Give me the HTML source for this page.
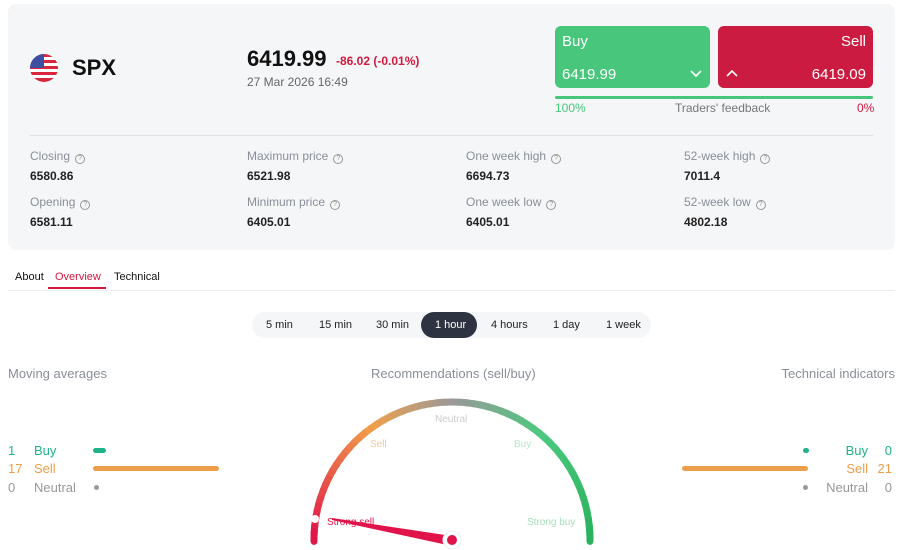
<!DOCTYPE html>
<html><head><meta charset="utf-8"><style>
*{margin:0;padding:0;box-sizing:border-box}
body{width:900px;height:550px;overflow:hidden;background:#fff;font-family:"Liberation Sans",sans-serif;position:relative;color:#111}
.a{position:absolute;white-space:nowrap}
.card{left:8px;top:4px;width:887px;height:246px;background:#f5f6f8;border-radius:8px}
.lbl{font-size:12px;color:#8a8f98}
.q{display:inline-block;width:10px;height:10px;border:1px solid #999;border-radius:50%;font-size:7px;line-height:8px;text-align:center;color:#999;margin-left:5px;vertical-align:0}
.val{font-size:12px;font-weight:bold;color:#222}
.seg{font-size:11px;color:#222}
</style></head><body>
<div class="a card"></div>
<svg class="a" style="left:30px;top:54px" width="28" height="28" viewBox="0 0 28 28"><defs><clipPath id="c"><circle cx="14" cy="14" r="14"/></clipPath></defs><g clip-path="url(#c)"><rect width="28" height="28" fill="#fff"/><rect y="0" width="28" height="3" fill="#d7263d"/><rect y="6" width="28" height="3" fill="#d7263d"/><rect y="12" width="28" height="3" fill="#d7263d"/><rect y="18" width="28" height="3" fill="#d7263d"/><rect y="24" width="28" height="4" fill="#d7263d"/><rect width="14" height="14" fill="#3c4fa0"/></g></svg>
<div class="a" style="left:72px;top:55px;font-size:22px;font-weight:bold">SPX</div>
<div class="a" style="left:247px;top:46px;font-size:22px;font-weight:bold">6419.99</div>
<div class="a" style="left:336px;top:54px;font-size:12px;font-weight:bold;color:#d3193f">-86.02 (-0.01%)</div>
<div class="a" style="left:247px;top:75px;font-size:12px;color:#666">27 Mar 2026 16:49</div>
<div class="a" style="left:555px;top:26px;width:155px;height:62px;background:#48c77c;border-radius:6px;color:#fff">
<div class="a" style="left:7px;top:7px;font-size:15px">Buy</div>
<div class="a" style="left:7px;top:40px;font-size:15px">6419.99</div>
<svg class="a" style="left:134px;top:43px" width="14" height="10"><path d="M2 2l5 5 5-5" stroke="#fff" stroke-width="1.6" fill="none"/></svg></div>
<div class="a" style="left:718px;top:26px;width:155px;height:62px;background:#cc1b40;border-radius:6px;color:#fff">
<div class="a" style="right:7px;top:7px;font-size:15px">Sell</div>
<div class="a" style="right:7px;top:40px;font-size:15px">6419.09</div>
<svg class="a" style="left:7px;top:43px" width="14" height="10"><path d="M2 7l5-5 5 5" stroke="#fff" stroke-width="1.6" fill="none"/></svg></div>
<div class="a" style="left:555px;top:96px;width:318px;height:3px;background:#48c77c;border-radius:2px"></div>
<div class="a" style="left:555px;top:101px;font-size:12px;color:#48c77c">100%</div>
<div class="a" style="left:675px;top:101px;font-size:12px;color:#777">Traders' feedback</div>
<div class="a" style="left:857px;top:101px;font-size:12px;color:#d3193f">0%</div>
<div class="a" style="left:30px;top:135px;width:843px;height:1px;background:#dde0e4"></div>
<div class="a lbl" style="left:30px;top:149px">Closing<span class="q">?</span></div><div class="a val" style="left:30px;top:169px">6580.86</div>
<div class="a lbl" style="left:30px;top:195px">Opening<span class="q">?</span></div><div class="a val" style="left:30px;top:215px">6581.11</div>
<div class="a lbl" style="left:247px;top:149px">Maximum price<span class="q">?</span></div><div class="a val" style="left:247px;top:169px">6521.98</div>
<div class="a lbl" style="left:247px;top:195px">Minimum price<span class="q">?</span></div><div class="a val" style="left:247px;top:215px">6405.01</div>
<div class="a lbl" style="left:466px;top:149px">One week high<span class="q">?</span></div><div class="a val" style="left:466px;top:169px">6694.73</div>
<div class="a lbl" style="left:466px;top:195px">One week low<span class="q">?</span></div><div class="a val" style="left:466px;top:215px">6405.01</div>
<div class="a lbl" style="left:684px;top:149px">52-week high<span class="q">?</span></div><div class="a val" style="left:684px;top:169px">7011.4</div>
<div class="a lbl" style="left:684px;top:195px">52-week low<span class="q">?</span></div><div class="a val" style="left:684px;top:215px">4802.18</div>
<div class="a" style="left:15px;top:271px;font-size:11px">About</div>
<div class="a" style="left:55px;top:271px;font-size:11px;color:#d3193f">Overview</div>
<div class="a" style="left:114px;top:271px;font-size:11px">Technical</div>
<div class="a" style="left:8px;top:290px;width:887px;height:1px;background:#eceef1"></div>
<div class="a" style="left:48px;top:287px;width:58px;height:2px;background:#d3193f"></div>
<div class="a" style="left:252px;top:312px;width:399px;height:26px;background:#f5f6f8;border-radius:13px"></div>
<div class="a" style="left:421px;top:312px;width:56px;height:26px;background:#2d3340;border-radius:13px"></div>
<div class="a seg" style="left:266px;top:319px">5 min</div>
<div class="a seg" style="left:319px;top:319px">15 min</div>
<div class="a seg" style="left:376px;top:319px">30 min</div>
<div class="a seg" style="left:435px;top:319px;color:#fff">1 hour</div>
<div class="a seg" style="left:491px;top:319px">4 hours</div>
<div class="a seg" style="left:553px;top:319px">1 day</div>
<div class="a seg" style="left:606px;top:319px">1 week</div>
<div class="a" style="left:8px;top:366px;font-size:13px;color:#8a8f98">Moving averages</div>
<div class="a" style="left:371px;top:366px;font-size:13px;color:#8a8f98">Recommendations (sell/buy)</div>
<div class="a" style="right:5px;top:366px;font-size:13px;color:#8a8f98">Technical indicators</div>
<div class="a" style="left:8px;top:443px;font-size:13px;color:#1fb38a">1</div><div class="a" style="left:34px;top:443px;font-size:13px;color:#1fb38a">Buy</div>
<div class="a" style="left:93px;top:448px;width:13px;height:5px;border-radius:3px;background:#1fb38a"></div>
<div class="a" style="left:8px;top:461px;font-size:13px;color:#ee9d4b">17</div><div class="a" style="left:34px;top:461px;font-size:13px;color:#ee9d4b">Sell</div>
<div class="a" style="left:93px;top:466px;width:126px;height:5px;border-radius:3px;background:#ee9d4b"></div>
<div class="a" style="left:8px;top:480px;font-size:13px;color:#999">0</div><div class="a" style="left:34px;top:480px;font-size:13px;color:#999">Neutral</div>
<div class="a" style="left:94px;top:485px;width:5px;height:5px;border-radius:50%;background:#999"></div>
<div class="a" style="right:8px;top:443px;font-size:13px;color:#1fb38a">0</div><div class="a" style="right:32px;top:443px;font-size:13px;color:#1fb38a">Buy</div>
<div class="a" style="left:803px;top:448px;width:6px;height:5px;border-radius:3px;background:#1fb38a"></div>
<div class="a" style="right:8px;top:461px;font-size:13px;color:#ee9d4b">21</div><div class="a" style="right:32px;top:461px;font-size:13px;color:#ee9d4b">Sell</div>
<div class="a" style="left:682px;top:466px;width:126px;height:5px;border-radius:3px;background:#ee9d4b"></div>
<div class="a" style="right:8px;top:480px;font-size:13px;color:#999">0</div><div class="a" style="right:32px;top:480px;font-size:13px;color:#999">Neutral</div>
<div class="a" style="left:803px;top:485px;width:5px;height:5px;border-radius:50%;background:#999"></div>
<svg class="a" style="left:0;top:0" width="900" height="550" id="g">
<text x="327" y="525" font-size="10" fill="#e0144a" font-family="Liberation Sans">Strong sell</text>
<text x="370" y="447" font-size="10" fill="#f5c89a" font-family="Liberation Sans">Sell</text>
<text x="435" y="422" font-size="10" fill="#ccc" font-family="Liberation Sans">Neutral</text>
<text x="514" y="447" font-size="10" fill="#b9e6cc" font-family="Liberation Sans">Buy</text>
<text x="527" y="525" font-size="10" fill="#a8e0bf" font-family="Liberation Sans">Strong buy</text>
<polygon points="332,518 452,536 452,546 332,520" fill="#e0144a"/>
<circle cx="452" cy="540" r="9" fill="#fff" stroke="#eee"/>
<circle cx="452" cy="540" r="5" fill="#e0144a"/>
</svg>
<script>
(function(){var s=document.getElementById('g'),cx=452,cy=540,r=138,N=60;
var st=[[0,[224,20,74]],[0.3,[240,160,75]],[0.5,[153,153,153]],[0.72,[76,201,127]],[1,[40,176,90]]];
function col(t){for(var i=0;i<st.length-1;i++){if(t<=st[i+1][0]){var f=(t-st[i][0])/(st[i+1][0]-st[i][0]);return 'rgb('+st[i][1].map(function(v,k){return Math.round(v+(st[i+1][1][k]-v)*f)}).join(',')+')'}}}
var ns='http://www.w3.org/2000/svg';
for(var i=0;i<N;i++){var a0=Math.PI*(1-i/N)+0.01,a1=Math.PI*(1-(i+1)/N)-0.01;
var p=document.createElementNS(ns,'path');
var y0=cy-r*Math.sin(a0),y1=cy-r*Math.sin(a1);
p.setAttribute('d','M'+(cx+r*Math.cos(a0))+' '+y0+' A'+r+' '+r+' 0 0 1 '+(cx+r*Math.cos(a1))+' '+y1);
p.setAttribute('stroke',col((i+0.5)/N));p.setAttribute('stroke-width','7');p.setAttribute('fill','none');
if(i==0||i==N-1)p.setAttribute('stroke-linecap','round');
s.insertBefore(p,s.firstChild);}
var c=document.createElementNS(ns,'circle');c.setAttribute('cx',315);c.setAttribute('cy',519);c.setAttribute('r',4);c.setAttribute('fill','#fff');s.appendChild(c);
})();
</script>
</body></html>
